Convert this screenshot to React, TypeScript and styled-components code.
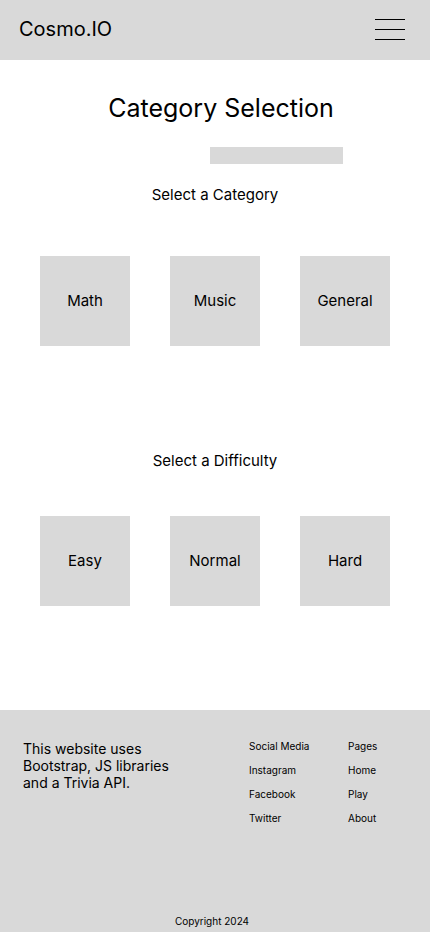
import React, { FC } from "react";
import styled, { createGlobalStyle } from "styled-components";

const GlobalStyle = createGlobalStyle`
  html, body {
    margin: 0;
    padding: 0;
    background: #ffffff;
  }
  body {
    font-family: Inter, "Noto Sans", sans-serif;
    color: #000000;
  }
`;

const Page = styled.div`
  width: 430px;
  min-height: 932px;
  display: flex;
  flex-direction: column;
`;

const Header = styled.header`
  height: 60px;
  background-color: #d9d9d9;
  display: flex;
  align-items: center;
  justify-content: space-between;
  padding: 0 25px 0 19px;
`;

const Logo = styled.div`
  font-size: 20px;
  line-height: 24px;
  margin-top: -3px;
`;

const Burger = styled.button`
  width: 30px;
  height: 21px;
  padding: 0;
  border: none;
  background: transparent;
  display: flex;
  flex-direction: column;
  justify-content: space-between;
  margin-top: -1px;

  span {
    display: block;
    height: 1px;
    background: #000000;
  }
`;

const Main = styled.main`
  flex: 1;
  display: flex;
  flex-direction: column;
  align-items: center;
  padding-top: 33px;
  padding-bottom: 104px;
`;

const Title = styled.h1`
  margin: 0;
  font-size: 25px;
  font-weight: 400;
  line-height: 30px;
  padding-left: 12px;
`;

const Bar = styled.div`
  width: 133px;
  height: 17px;
  background-color: #d9d9d9;
  margin-top: 24px;
  align-self: flex-start;
  margin-left: 210px;
`;

const Label = styled.h2<{ $top: number }>`
  margin: ${(p) => p.$top}px 0 0;
  font-size: 15px;
  font-weight: 400;
  line-height: 18px;
`;

const Grid = styled.div<{ $top: number }>`
  display: grid;
  grid-template-columns: repeat(3, 90px);
  column-gap: 40px;
  margin-top: ${(p) => p.$top}px;
`;

const Tile = styled.button`
  width: 90px;
  height: 90px;
  border: none;
  padding: 0 0 2px;
  background-color: #d9d9d9;
  font-family: Inter, "Noto Sans", sans-serif;
  font-size: 15px;
  color: #000000;
`;

const Footer = styled.footer`
  height: 222px;
  background-color: #d9d9d9;
  display: flex;
  flex-direction: column;
  padding: 30px 0 0;
  box-sizing: border-box;
`;

const FooterTop = styled.div`
  display: flex;
  padding-left: 23px;
`;

const About = styled.p`
  margin: 0;
  width: 226px;
  flex-shrink: 0;
  font-size: 14px;
  line-height: 17px;
`;

const LinkColumn = styled.ul<{ $width: number }>`
  list-style: none;
  margin: 0;
  padding: 0;
  width: ${(p) => p.$width}px;
  flex-shrink: 0;
  display: flex;
  flex-direction: column;
  gap: 12px;

  li {
    font-size: 10px;
    line-height: 12px;
  }
`;

const Copyright = styled.div`
  margin-top: auto;
  margin-bottom: 5px;
  text-align: center;
  font-size: 10px;
  line-height: 12px;
  padding-right: 6px;
`;

const categories = ["Math", "Music", "General"];
const difficulties = ["Easy", "Normal", "Hard"];

const App: FC = () => {
  return (
    <Page>
      <GlobalStyle />
      <Header>
        <Logo>Cosmo.IO</Logo>
        <Burger aria-label="Menu">
          <span />
          <span />
          <span />
        </Burger>
      </Header>
      <Main>
        <Title>Category Selection</Title>
        <Bar />
        <Label $top={22}>Select a Category</Label>
        <Grid $top={52}>
          {categories.map((c) => (
            <Tile key={c}>{c}</Tile>
          ))}
        </Grid>
        <Label $top={106}>Select a Difficulty</Label>
        <Grid $top={46}>
          {difficulties.map((d) => (
            <Tile key={d}>{d}</Tile>
          ))}
        </Grid>
      </Main>
      <Footer>
        <FooterTop>
          <About>
            This website uses
            <br />
            Bootstrap, JS libraries
            <br />
            and a Trivia API.
          </About>
          <LinkColumn $width={99}>
            <li>Social Media</li>
            <li>Instagram</li>
            <li>Facebook</li>
            <li>Twitter</li>
          </LinkColumn>
          <LinkColumn $width={60}>
            <li>Pages</li>
            <li>Home</li>
            <li>Play</li>
            <li>About</li>
          </LinkColumn>
        </FooterTop>
        <Copyright>Copyright 2024</Copyright>
      </Footer>
    </Page>
  );
};

export default App;
